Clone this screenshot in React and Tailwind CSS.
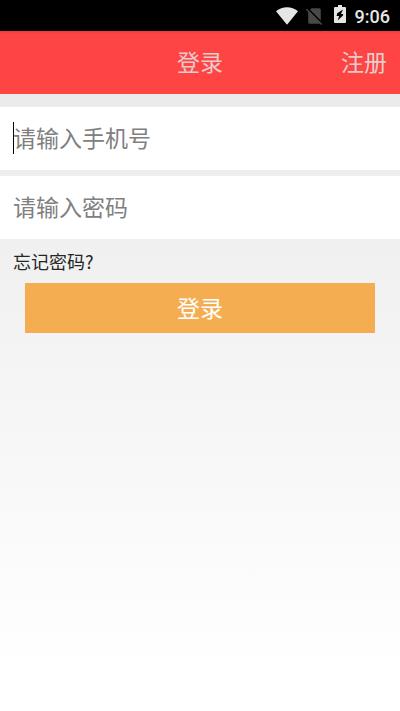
import React from 'react';

const StatusBar = () => (
  <div className="flex h-[31px] items-center justify-end bg-black pr-[10px] text-[#e6e6e6]">
    {/* Wifi */}
    <svg className="h-[18px] w-[22px]" viewBox="0 0 22 18" fill="currentColor">
      <path d="M0 4.2C6.4-1.2 15.6-1.2 22 4.2L11.4 17.2Q11 17.6 10.6 17.2Z" />
    </svg>

    {/* No SIM */}
    <svg className="ml-[8px] h-[18px] w-[17px]" viewBox="0 0 17 18">
      <path
        d="M5.6 1.3H13.3Q14.8 1.3 14.8 2.8V15.2Q14.8 16.7 13.3 16.7H3.7Q2.2 16.7 2.2 15.2V4.7Z"
        fill="#484848"
      />
      <path d="M1.2 1.2L17 17" stroke="#000" strokeWidth="1.8" />
      <path d="M.4 2.2L15.8 17.6" stroke="#484848" strokeWidth="1.5" />
    </svg>

    {/* Battery charging */}
    <svg className="mb-[3px] ml-[11px] h-[18px] w-[12px]" viewBox="0 0 12 18">
      <path d="M4 0H8V2H11Q12 2 12 3V17Q12 18 11 18H1Q0 18 0 17V3Q0 2 1 2H4Z" fill="currentColor" />
      <path d="M9 4.6L3.2 8.2L2.6 11H5.2L3.6 15.6L9 10.6L9.2 9H7Z" fill="#000" />
    </svg>

    <span className="ml-[9px] mt-[2px] font-['Roboto'] text-[18px] font-medium leading-[22px]">9:06</span>
  </div>
);

const Header = () => (
  <header className="grid h-[63px] grid-cols-3 items-center bg-[#ff4444] bg-linear-to-b from-[#f03c3c] from-0% to-[#ff4444] to-[4px] px-[13px] pb-[2px] text-[23px] leading-none text-[#e6cccc]">
    <h1 className="col-start-2 text-center">登录</h1>
    <button className="text-right">注册</button>
  </header>
);

const Field = ({ label, focused }) => (
  <div className="flex h-[63px] items-center bg-white px-[13px] pb-[2px] text-[23px] leading-none text-[#808080]">
    {focused && <span className="-mr-px h-[32px] w-px bg-black" />}
    <span>{label}</span>
  </div>
);

const App = () => {
  return (
    <div className="flex h-[711px] w-[400px] flex-col overflow-hidden font-['Noto_Sans_CJK_SC',sans-serif]">
      <StatusBar />
      <Header />
      <main className="flex flex-1 flex-col bg-linear-to-b from-[#ebebeb] to-white to-94% pt-[13px]">
        <div className="flex flex-col gap-[6px]">
          <Field label="请输入手机号" focused />
          <Field label="请输入密码" />
        </div>
        <a className="flex h-[44px] items-center px-[13px] text-[18px] leading-none text-[#262626]">
          忘记密码?
        </a>
        <button className="mx-[25px] h-[50px] bg-[#f4ae51] pb-[2px] text-[23px] leading-none text-white">
          登录
        </button>
      </main>
    </div>
  );
};

export default App;
